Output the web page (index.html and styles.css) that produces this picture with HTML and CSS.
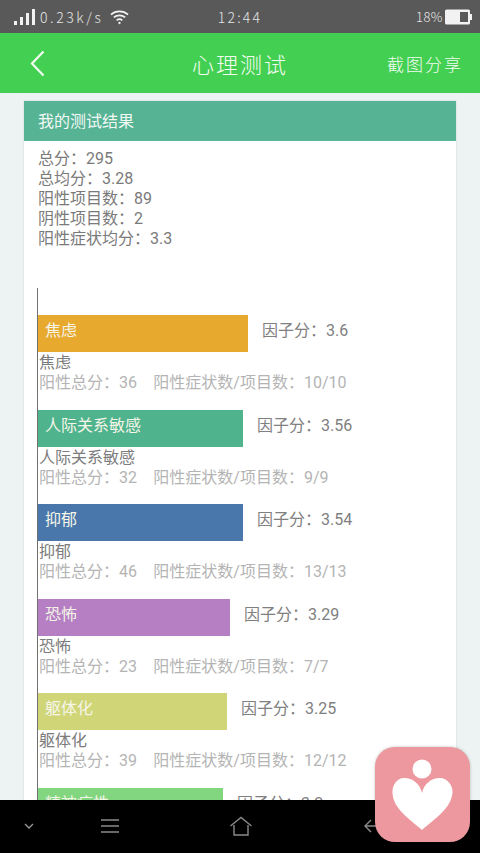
FILE: index.html
```html
<!DOCTYPE html>
<html lang="zh">
<head>
<meta charset="utf-8">
<title>心理测试</title>
<link rel="stylesheet" href="styles.css">
</head>
<body>
<div class="phone">
  <div class="status">
    <div class="status-left">
      <svg class="signal" width="21" height="16" viewBox="0 0 21 16"><rect x="0" y="12" width="3" height="4"/><rect x="6" y="8" width="3" height="8"/><rect x="12" y="4" width="3" height="12"/><rect x="18" y="0" width="3" height="16"/></svg>
      <span class="speed">0.23k/s</span>
      <svg class="wifi" width="19" height="16" viewBox="0 0 20 16" fill="none" stroke="#f2f2f2" stroke-width="1.8"><path d="M1 5.500C6 1 14 1 19 5.500"/><path d="M4 8.500C7.500 5.500 12.500 5.500 16 8.500"/><path d="M7 11.500C8.800 10 11.200 10 13 11.500"/><circle cx="10" cy="14.300" r="1.200" fill="#f2f2f2" stroke="none"/></svg>
    </div>
    <div class="clock">12:44</div>
    <div class="status-right">
      <span class="pct">18%</span>
      <svg width="27" height="16" viewBox="0 0 27 16"><rect x="0" y="0.500" width="25" height="15" rx="1.500" fill="#f2f2f2"/><rect x="15" y="3" width="8" height="10" fill="#595959"/><rect x="25" y="5" width="2" height="6" fill="#f2f2f2"/></svg>
    </div>
  </div>

  <header class="bar">
    <svg class="back" width="15" height="27" viewBox="0 0 15 27" fill="none" stroke="#f4fbf1" stroke-width="2.200"><path d="M13.500 1.500L2 13.500l11.500 12"/></svg>
    <h1 class="title">心理测试</h1>
    <span class="share">截图分享</span>
  </header>

  <main class="content">
    <section class="card">
      <h2 class="card-head">我的测试结果</h2>
      <div class="summary">
        <div>总分：295</div>
        <div>总均分：3.28</div>
        <div>阳性项目数：89</div>
        <div>阴性项目数：2</div>
        <div>阳性症状均分：3.3</div>
      </div>
      <div class="chart">
        <div class="item">
          <div class="bar-row"><div class="fill c1" style="width:210px">焦虑</div><span class="score">因子分：3.6</span></div>
          <div class="name">焦虑</div>
          <div class="meta">阳性总分：36&emsp;阳性症状数/项目数：10/10</div>
        </div>
        <div class="item">
          <div class="bar-row"><div class="fill c2" style="width:205px">人际关系敏感</div><span class="score">因子分：3.56</span></div>
          <div class="name">人际关系敏感</div>
          <div class="meta">阳性总分：32&emsp;阳性症状数/项目数：9/9</div>
        </div>
        <div class="item">
          <div class="bar-row"><div class="fill c3" style="width:205px">抑郁</div><span class="score">因子分：3.54</span></div>
          <div class="name">抑郁</div>
          <div class="meta">阳性总分：46&emsp;阳性症状数/项目数：13/13</div>
        </div>
        <div class="item">
          <div class="bar-row"><div class="fill c4" style="width:192px">恐怖</div><span class="score">因子分：3.29</span></div>
          <div class="name">恐怖</div>
          <div class="meta">阳性总分：23&emsp;阳性症状数/项目数：7/7</div>
        </div>
        <div class="item">
          <div class="bar-row"><div class="fill c5" style="width:189px">躯体化</div><span class="score">因子分：3.25</span></div>
          <div class="name">躯体化</div>
          <div class="meta">阳性总分：39&emsp;阳性症状数/项目数：12/12</div>
        </div>
        <div class="item">
          <div class="bar-row"><div class="fill c6" style="width:185px">精神病性</div><span class="score">因子分：3.2</span></div>
        </div>
      </div>
    </section>
  </main>

  <nav class="nav">
    <svg class="n-down" width="12" height="8" viewBox="0 0 12 8" fill="none" stroke="#9a9a9a" stroke-width="1.300"><path d="M2 2l4 4 4-4"/></svg>
    <svg class="n-menu" width="20" height="16" viewBox="0 0 20 16" fill="none" stroke="#8a8a8a" stroke-width="1.400"><path d="M1 2h18M1 8h18M1 14h18"/></svg>
    <svg class="n-home" width="24" height="20" viewBox="0 0 24 20" fill="none" stroke="#8a8a8a" stroke-width="1.400"><path d="M1.500 10L12 1.500 22.500 10M5 9v10h14V9"/></svg>
    <svg class="n-back" width="20" height="16" viewBox="0 0 20 16" fill="none" stroke="#8a8a8a" stroke-width="1.400"><path d="M8 2L2 8l6 6M2 8h18"/></svg>
  </nav>

  <div class="fab">
    <svg width="95" height="95" viewBox="0 0 95 95" fill="#fff"><circle cx="47" cy="22" r="9.500"/><path d="M47 46C45 37 38 31 29 31 22 31 17 38 17.500 46 18 62 36 73 47 83 58 73 76 62 77.500 46 78 38 72 31 65 31 56 31 49 37 47 46Z"/></svg>
  </div>
</div>
</body>
</html>
```

FILE: styles.css
```css
* { box-sizing: border-box; }
html, body { margin: 0; padding: 0; }
body { font-family: "Roboto", "Noto Sans CJK SC", sans-serif; }
.phone {
  position: relative;
  width: 480px;
  height: 853px;
  overflow: hidden;
  display: flex;
  flex-direction: column;
  background: #edf3f3;
}
.status {
  flex: 0 0 33px;
  background: #595959;
  color: #e6e6e6;
  display: grid;
  grid-template-columns: 1fr auto 1fr;
  align-items: center;
  padding: 0 8px;
  font-family: "Noto Sans CJK SC", sans-serif;
  font-weight: 300;
  font-size: 14px;
}
.status-left { display: flex; align-items: center; gap: 5px; padding-left: 6px; }
.signal { fill: #f2f2f2; }
.speed { letter-spacing: 2.600px; margin-right: 2px; }
.clock { letter-spacing: 2.200px; }
.status-right { display: flex; align-items: center; justify-content: flex-end; gap: 2px; }
.pct { font-size: 13px; letter-spacing: .5px; }
.bar {
  flex: 0 0 60px;
  background: #43d052;
  display: grid;
  grid-template-columns: 1fr auto 1fr;
  align-items: center;
  padding: 0 17px;
  color: #f4fbf1;
  font-family: "Noto Sans CJK SC", sans-serif;
  font-weight: 300;
}
.back { margin-left: 13px; }
.title {
  margin: 0;
  font-size: 22px;
  font-weight: 300;
  letter-spacing: 2px;
}
.share { font-size: 17px; letter-spacing: 2px; justify-self: end; }
.content {
  flex: 1 1 0;
  min-height: 0;
  overflow: hidden;
  padding: 8px 24px 0;
}
.card {
  background: #fff;
  box-shadow: 0 0 2px rgba(0,0,0,.12);
  padding-bottom: 30px;
}
.card-head {
  margin: 0;
  height: 40px;
  background: #56b394;
  color: #f2f8f4;
  font-size: 16px;
  font-weight: 400;
  line-height: 39px;
  padding-left: 14px;
  font-family: "Noto Sans CJK SC", sans-serif;
}
.summary {
  padding: 8px 0 0 14px;
  font-size: 16px;
  line-height: 20px;
  color: #7a7a7a;
}
.chart {
  margin: 39px 0 0 13px;
  border-left: 1px solid #707070;
  padding-top: 27px;
}
.item { height: 94.500px; }
.bar-row { display: flex; align-items: flex-start; height: 37px; }
.fill {
  height: 37px;
  line-height: 32px;
  padding-left: 7px;
  color: #f5f5e8;
  font-size: 16px;
  flex: none;
}
.c1 { background: #e8a92f; }
.c2 { background: #4fb38d; }
.c3 { background: #4a77ab; }
.c4 { background: #b67fc4; }
.c5 { background: #d0d578; }
.c6 { background: #82d67f; }
.score {
  margin-left: 14px;
  font-size: 16px;
  line-height: 32px;
  color: #808080;
}
.name, .meta { padding-left: 1px; font-size: 16px; line-height: 20px; white-space: nowrap; }
.name { color: #7c7c7c; margin-top: 1px; }
.meta { color: #b4b4b4; }
.nav {
  flex: 0 0 53px;
  background: #000;
  display: flex;
  align-items: center;
  padding: 0 0 1px 23px;
}
.n-menu { margin-left: 65px; }
.n-home { margin-left: 109px; }
.n-back { margin-left: 110px; }
.fab {
  position: absolute;
  left: 375px;
  top: 747px;
  width: 95px;
  height: 95px;
  border-radius: 20px;
  background: #ec989e;
  box-shadow: 0 0 3px rgba(0,0,0,.25);
}
```
